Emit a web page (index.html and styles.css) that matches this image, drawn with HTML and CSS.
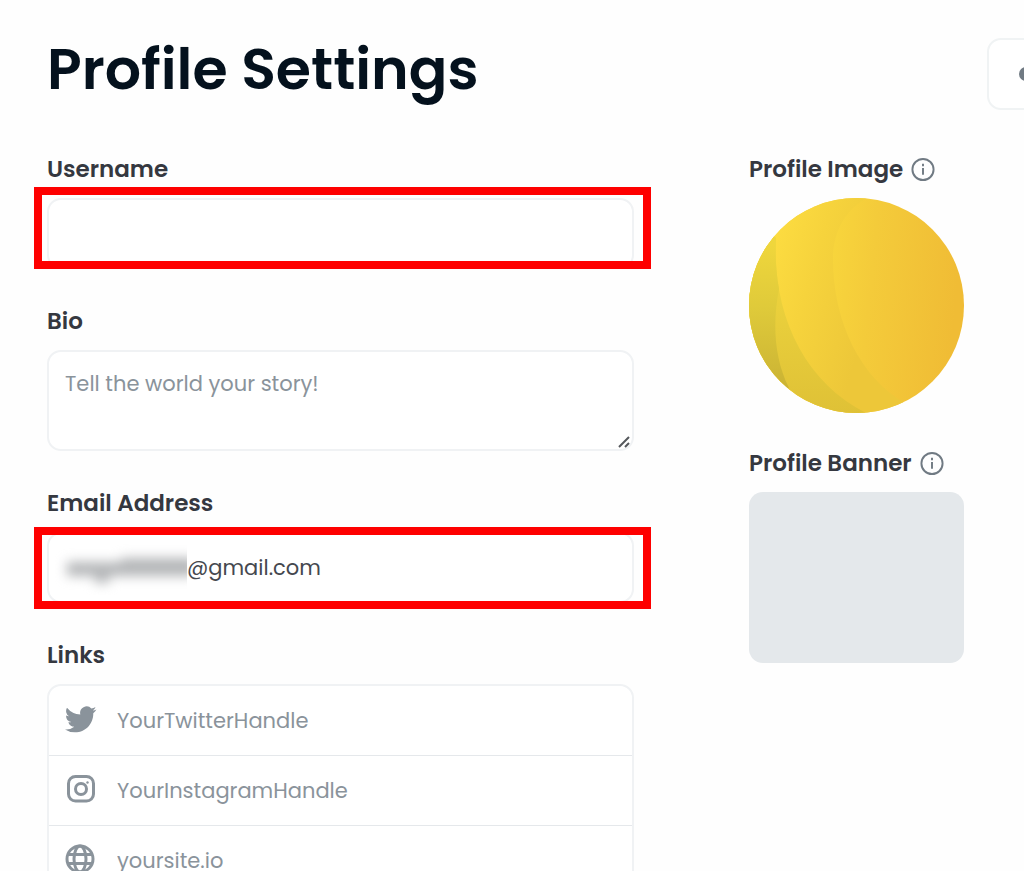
FILE: index.html
```html
<!DOCTYPE html>
<html lang="en">
<head>
  <meta charset="UTF-8" />
  <meta name="viewport" content="width=device-width, initial-scale=1.0"/>
  <title>Profile Settings</title>
  <link rel="stylesheet" href="styles.css">
</head>
<body>
  <header class="header">
    <h1>Profile Settings</h1>
    <button type="button" class="more-btn" aria-label="More options">
      <svg width="50" height="14" viewBox="0 0 50 14"><circle cx="7" cy="7" r="7"/><circle cx="25" cy="7" r="7"/><circle cx="43" cy="7" r="7"/></svg>
    </button>
  </header>

  <main class="settings">
    <form class="form">
      <div class="field">
        <label for="username">Username</label>
        <div class="control highlight highlight-username">
          <input type="text" id="username" />
        </div>
      </div>

      <div class="field">
        <label for="bio">Bio</label>
        <div class="control">
          <textarea id="bio" placeholder="Tell the world your story!"></textarea>
          <svg class="grip" width="14" height="14" viewBox="0 0 14 14"><path d="M2 12L12 2M8 12l4-4"/></svg>
        </div>
      </div>

      <div class="field">
        <label for="email">Email Address</label>
        <div class="control highlight highlight-email">
          <input type="text" id="email" class="email" value="@gmail.com" />
          <svg class="redacted" width="132" height="56" viewBox="0 0 132 56">
            <path d="M12 23h38v14H12zM50 23h16v14H50zM66 19h74v18H66zM40 36h14v8H40z"/>
          </svg>
        </div>
      </div>

      <div class="field">
        <label for="twitter">Links</label>
        <!-- Social links -->
        <div class="links">
          <div class="link-row">
            <svg class="icon" viewBox="0 0 24 24"><path d="M23.6 4.9a9.6 9.6 0 0 1-2.8.8 4.9 4.9 0 0 0 2.1-2.7 9.8 9.8 0 0 1-3.1 1.2 4.85 4.85 0 0 0-8.3 4.4A13.8 13.8 0 0 1 1.5 3.5a4.85 4.85 0 0 0 1.5 6.5 4.8 4.8 0 0 1-2.2-.6v.1a4.85 4.85 0 0 0 3.9 4.8 4.9 4.9 0 0 1-2.2.1 4.85 4.85 0 0 0 4.5 3.4A9.75 9.75 0 0 1 0 19.8a13.75 13.75 0 0 0 7.4 2.2c8.9 0 13.8-7.4 13.8-13.8v-.6a9.9 9.9 0 0 0 2.4-2.7z"/></svg>
            <input type="text" id="twitter" placeholder="YourTwitterHandle" />
          </div>
          <div class="link-row">
            <svg class="icon icon-line" viewBox="0 0 32 32"><rect x="3.5" y="3.5" width="25" height="24.5" rx="7"/><circle cx="16" cy="16" r="5.5"/><circle class="dot" cx="22.5" cy="9.5" r="1.2"/></svg>
            <input type="text" aria-label="Instagram" placeholder="YourInstagramHandle" />
          </div>
          <div class="link-row">
            <svg class="icon icon-line" viewBox="0 0 32 32"><circle cx="15" cy="16" r="13"/><ellipse cx="15" cy="16" rx="6" ry="13"/><path d="M3 11.5h24M3 20.5h24"/></svg>
            <input type="text" aria-label="Website" placeholder="yoursite.io" />
          </div>
        </div>
      </div>
    </form>

    <aside class="media">
      <section class="field">
        <h2>Profile Image
          <svg class="info" viewBox="0 0 26 26"><circle cx="13" cy="13" r="11"/><path d="M13 11.5v7M13 7v2.5"/></svg>
        </h2>
        <svg class="avatar" viewBox="0 0 215 215" role="img" aria-label="Profile image">
          <defs>
            <clipPath id="round"><circle cx="107.5" cy="107.5" r="107.5"/></clipPath>
            <linearGradient id="base" x1="0" y1="0" x2="1" y2="0.1">
              <stop offset="0.38" stop-color="#f8d63c"/>
              <stop offset="0.6" stop-color="#f4cb3a"/>
              <stop offset="1" stop-color="#f0bc35"/>
            </linearGradient>
            <linearGradient id="middle" x1="0" y1="0" x2="0.85" y2="0.35">
              <stop offset="0.2" stop-color="#fddd41"/>
              <stop offset="0.55" stop-color="#f6d33c"/>
              <stop offset="1" stop-color="#edc739"/>
            </linearGradient>
            <linearGradient id="lower" x1="0" y1="0" x2="0" y2="1">
              <stop offset="0" stop-color="#f1d63c"/>
              <stop offset="0.45" stop-color="#ead03c"/>
              <stop offset="1" stop-color="#dfc136"/>
            </linearGradient>
            <linearGradient id="edge" x1="0" y1="0" x2="0" y2="1">
              <stop offset="0.15" stop-color="#efd63c"/>
              <stop offset="0.5" stop-color="#dfca3a"/>
              <stop offset="1" stop-color="#c8b033"/>
            </linearGradient>
          </defs>
          <g clip-path="url(#round)">
            <rect width="215" height="215" fill="url(#base)"/>
            <path d="M0 0H118C96 12 84 34 84 61C84 125 112 180 156 205V215H0z" fill="url(#middle)"/>
            <path d="M0 20L27 40C23 115 54 183 117 215H0z" fill="url(#lower)"/>
            <path d="M0 20L27 40C26 56 27 75 30 91C24 122 24 158 40 190L0 200z" fill="url(#edge)"/>
          </g>
        </svg>
      </section>

      <section class="field">
        <h2>Profile Banner
          <svg class="info" viewBox="0 0 26 26"><circle cx="13" cy="13" r="11"/><path d="M13 11.5v7M13 7v2.5"/></svg>
        </h2>
        <div class="banner"></div>
      </section>
    </aside>
  </main>
</body>
</html>
```
FILE: styles.css
```css
* {
  box-sizing: border-box;
}

body {
  margin: 0;
  background: #fefefe;
  color: #353840;
  font-family: 'Poppins', 'Inter', sans-serif;
  font-size: 21px;
}

.header {
  display: flex;
  justify-content: space-between;
  align-items: flex-start;
  padding: 31px 0 0 47px;
  overflow: hidden;
}

h1 {
  margin: 0;
  color: #04111d;
  font-size: 57px;
  font-weight: 600;
  line-height: 76px;
}

.more-btn {
  flex: none;
  width: 104px;
  height: 72px;
  margin: 7px -67px 0 0;
  padding: 0 0 0 30px;
  text-align: left;
  background: #fff;
  border: 2px solid #f0f3f4;
  border-radius: 14px;
}

.more-btn svg {
  display: block;
  fill: #707a83;
}

.settings {
  display: grid;
  grid-template-columns: 1fr 215px;
  gap: 115px;
  padding: 47px 60px 0 47px;
}

.field {
  margin-bottom: 40px;
}

.media .field {
  margin-bottom: 38px;
}

label,
h2 {
  display: flex;
  align-items: center;
  gap: 7px;
  margin: 0 0 16px;
  font-size: 23px;
  font-weight: 600;
  line-height: 25px;
}

.control {
  position: relative;
}

input,
textarea {
  display: block;
  width: 100%;
  height: 71px;
  padding: 0 18px;
  border: 2px solid #f0f2f4;
  border-radius: 14px;
  background: #fff;
  color: #45484f;
  font: inherit;
  outline: none;
}

textarea {
  height: 101px;
  padding: 17px 16px;
  line-height: 30px;
  resize: none;
}

::placeholder {
  color: #8a939b;
  opacity: 1;
}

.grip {
  position: absolute;
  right: 3px;
  bottom: 2px;
  fill: none;
  stroke: #55585c;
  stroke-width: 2;
}

.email {
  padding-left: 138px;
}

.redacted {
  position: absolute;
  left: 8px;
  top: 7px;
  overflow: hidden;
}

.redacted path {
  fill: #b4b6b8;
  filter: blur(6px);
}

/* Red frames round the inputs */
.highlight::after {
  content: '';
  position: absolute;
  left: -13px;
  right: -17px;
  border: 8px solid #fe0000;
  pointer-events: none;
}

.highlight-username::after {
  top: -11px;
  bottom: 0;
}

.highlight-email::after {
  top: -5px;
  bottom: -6px;
}

.links {
  border: 2px solid #f0f2f4;
  border-radius: 14px;
  background: #fff;
}

.link-row {
  display: flex;
  align-items: center;
  gap: 20px;
  padding-left: 16px;
}

.link-row + .link-row {
  border-top: 1px solid #e5e8eb;
}

.link-row input {
  height: 69px;
  padding: 0;
  border: none;
}

.icon {
  flex: none;
  width: 32px;
  height: 32px;
  margin-bottom: 4px;
  fill: #8a939b;
}

.icon-line {
  fill: none;
  stroke: #8a939b;
  stroke-width: 3;
}

.icon-line .dot {
  fill: #8a939b;
  stroke: none;
}

.info {
  width: 26px;
  height: 25px;
  fill: none;
  stroke: #707a83;
  stroke-width: 2;
}

.avatar {
  display: block;
  width: 100%;
}

.banner {
  height: 171px;
  border-radius: 14px;
  background: #e4e8eb;
}
```
